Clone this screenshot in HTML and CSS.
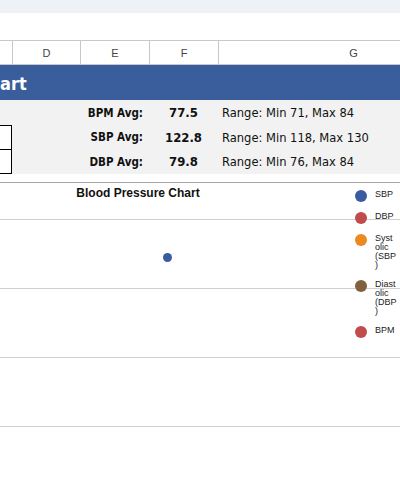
FILE: index.html
```html
<!DOCTYPE html>
<html>
<head>
<meta charset="utf-8">
<link rel="stylesheet" href="styles.css">
</head>
<body>
<div class="sheet">
  <div class="topbar"></div>
  <div class="blank"></div>
  <div class="colhead">
    <div class="ch"></div>
    <div class="ch">D</div>
    <div class="ch">E</div>
    <div class="ch">F</div>
    <div class="ch">G</div>
  </div>
  <div class="title"><span class="title-text">art</span></div>
  <div class="stats">
    <div class="srow r1">
      <div class="ca"></div>
      <div class="cd"></div>
      <div class="ce">BPM Avg:</div>
      <div class="cf">77.5</div>
      <div class="cg">Range: Min 71, Max 84</div>
    </div>
    <div class="srow r2">
      <div class="ca box-top"></div>
      <div class="cd"></div>
      <div class="ce">SBP Avg:</div>
      <div class="cf">122.8</div>
      <div class="cg">Range: Min 118, Max 130</div>
    </div>
    <div class="srow r3">
      <div class="ca box-bottom"></div>
      <div class="cd"></div>
      <div class="ce">DBP Avg:</div>
      <div class="cf">79.8</div>
      <div class="cg">Range: Min 76, Max 84</div>
    </div>
  </div>
  <div class="gap"></div>
  <div class="chart">
    <div class="chart-title">Blood Pressure Chart</div>
    <div class="plot">
      <div class="grow"></div>
      <div class="grow"></div>
      <div class="grow"></div>
      <div class="grow"></div>
    </div>
    <div class="dot"></div>
    <div class="legend">
      <div class="li"><span class="sw sbp"></span><span class="lt">SBP</span></div>
      <div class="li"><span class="sw dbp"></span><span class="lt">DBP</span></div>
      <div class="li"><span class="sw sys"></span><span class="lt">Systolic (SBP)</span></div>
      <div class="li"><span class="sw dia"></span><span class="lt">Diastolic (DBP)</span></div>
      <div class="li"><span class="sw bpm"></span><span class="lt">BPM</span></div>
    </div>
  </div>
</div>
</body>
</html>
```
FILE: styles.css
```css
html, body {
  margin: 0;
  padding: 0;
  background: #ffffff;
}
body {
  width: 400px;
  height: 479px;
  overflow: hidden;
}
.sheet {
  width: 400px;
  overflow: hidden;
  font-family: "Liberation Sans", Arial, sans-serif;
}
.topbar {
  height: 13px;
  background: #eef2f7;
}
.blank {
  height: 27px;
}
.colhead {
  display: grid;
  grid-template-columns: 12px 68px 69px 69px 270px;
  height: 25px;
  box-sizing: border-box;
  border-top: 1px solid #c8c8c8;
  border-bottom: 1px solid #c8c8c8;
  width: 488px;
}
.ch {
  border-left: 1px solid #c8c8c8;
  font-size: 11px;
  color: #444;
  display: flex;
  align-items: center;
  justify-content: center;
}
.ch:first-child {
  border-left: none;
}
.title {
  height: 35px;
  background: #3a5d9c;
  display: flex;
  align-items: center;
  overflow: hidden;
}
.title-text {
  color: #ffffff;
  font-family: "DejaVu Sans Condensed", "DejaVu Sans", sans-serif;
  font-weight: bold;
  font-size: 18px;
  padding-top: 2px;
}
.stats {
  background: #f2f2f2;
  font-family: "DejaVu Sans Condensed", "DejaVu Sans", sans-serif;
  color: #111;
}
.srow {
  display: grid;
  grid-template-columns: 12px 68px 69px 69px 182px;
  align-items: stretch;
}
.r1 { height: 25px; }
.r2 { height: 24px; }
.r3 { height: 25px; }
.ca {
  box-sizing: border-box;
}
.box-top {
  background: #fff;
  border-top: 1px solid #000;
  border-right: 1px solid #000;
}
.box-bottom {
  background: #fff;
  border-top: 1px solid #000;
  border-right: 1px solid #000;
  border-bottom: 1px solid #000;
}
.ce, .cf, .cg {
  display: flex;
  align-items: center;
  white-space: nowrap;
}
.ce {
  justify-content: flex-end;
  padding-right: 6px;
  font-weight: bold;
  font-size: 11.5px;
}
.cf {
  justify-content: center;
  font-weight: bold;
  font-size: 13px;
}
.cg {
  padding-left: 4px;
  font-size: 12.8px;
}
.gap {
  height: 8px;
}
.chart {
  position: relative;
  border-top: 1px solid #a6a6a6;
  height: 300px;
}
.chart-title {
  height: 36px;
  width: 276px;
  box-sizing: border-box;
  padding-top: 3px;
  text-align: center;
  font-weight: bold;
  font-size: 12px;
  line-height: 14px;
  color: #111;
}
.grow {
  height: 69px;
  box-sizing: border-box;
  border-top: 1px solid #d0d0d0;
}
.dot {
  position: absolute;
  left: 163px;
  top: 70px;
  width: 9px;
  height: 9px;
  border-radius: 50%;
  background: #3a5ba0;
}
.legend {
  position: absolute;
  left: 355px;
  top: 7px;
  display: flex;
  flex-direction: column;
  gap: 10px;
}
.li {
  display: flex;
  align-items: flex-start;
  gap: 8px;
}
.sw {
  width: 12px;
  height: 12px;
  border-radius: 50%;
  flex: none;
}
.sbp { background: #3a5ba0; }
.dbp { background: #c04b4b; }
.sys { background: #ec8a20; }
.dia { background: #80603e; }
.bpm { background: #c24b4b; }
.lt {
  width: 22px;
  font-size: 9px;
  line-height: 9px;
  color: #222;
  overflow-wrap: anywhere;
}
```
